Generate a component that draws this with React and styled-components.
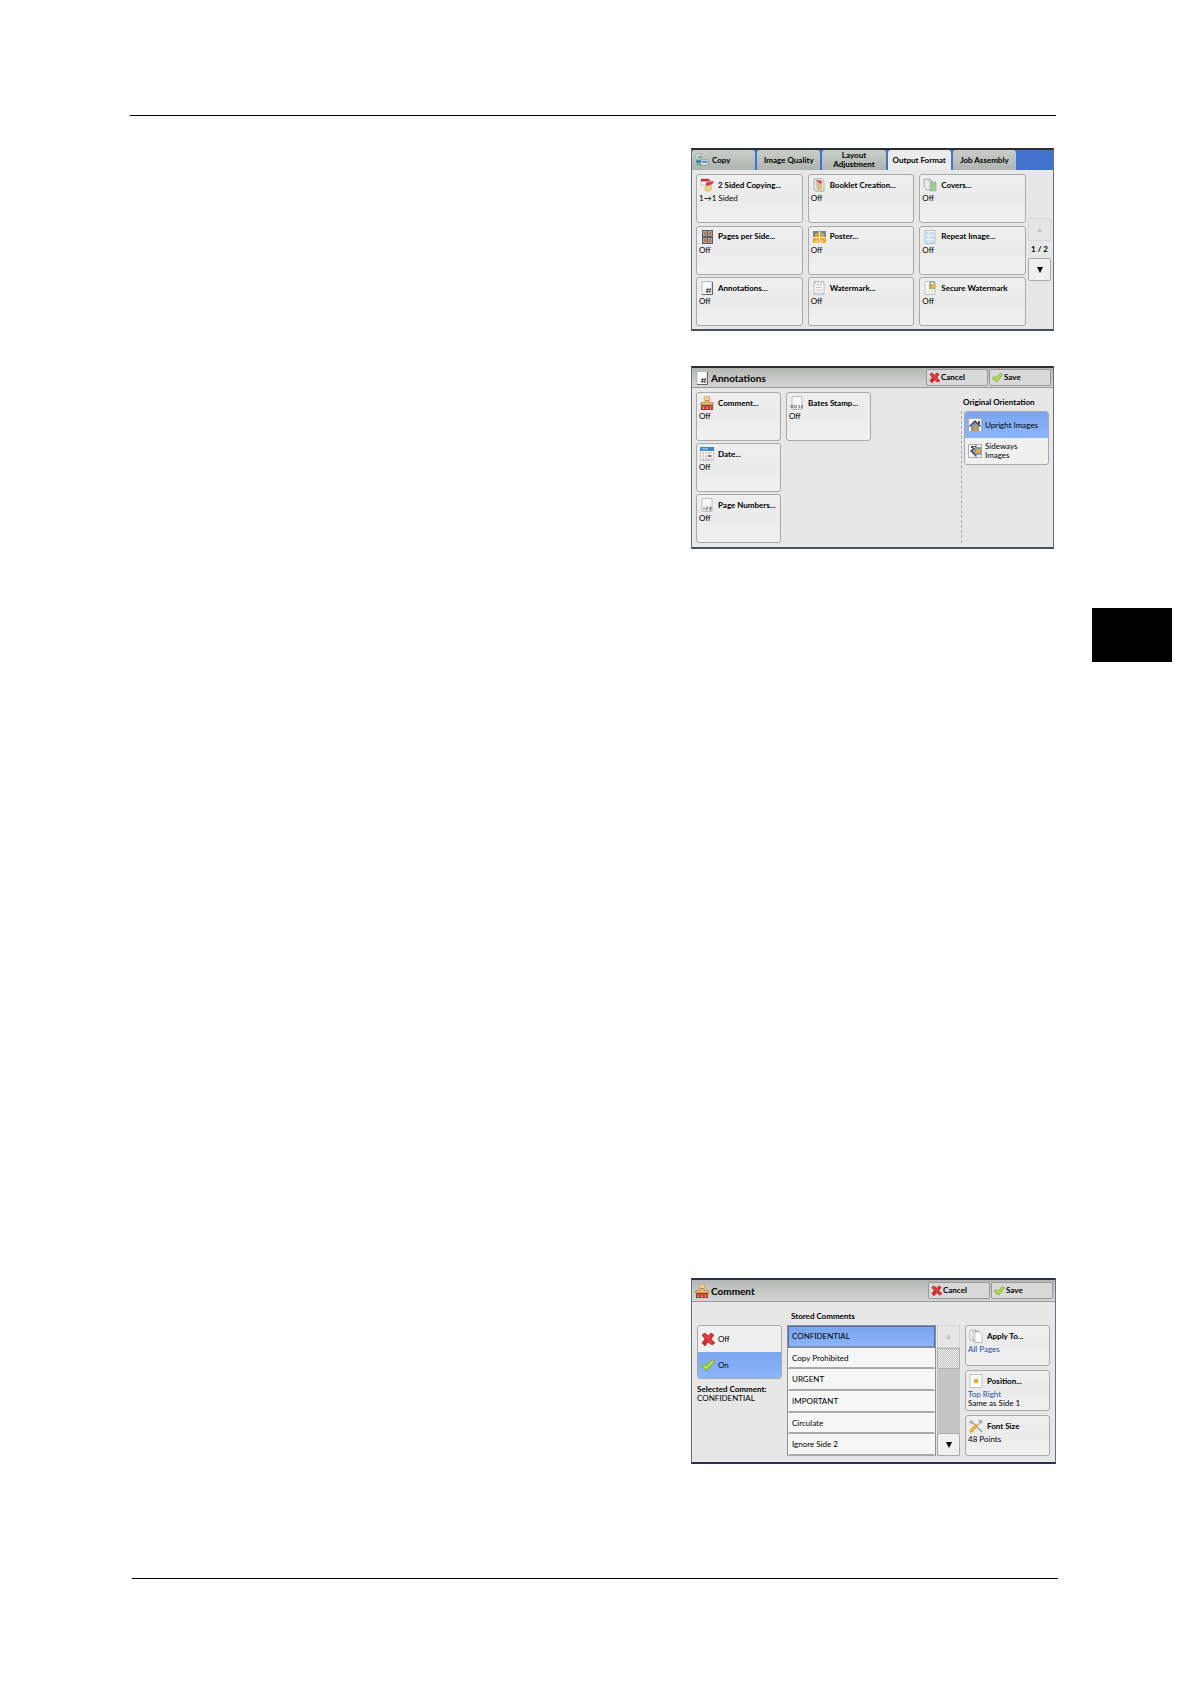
import React, { useState } from "react";
import styled, { createGlobalStyle } from "styled-components";

const GlobalStyle = createGlobalStyle`
  * {
    box-sizing: border-box;
  }
  body {
    margin: 0;
    background: #fff;
    color: #000;
    font-family: Lato, "Open Sans", sans-serif;
    font-size: 8px;
    line-height: 9px;
  }
  button {
    font: inherit;
    color: inherit;
    padding: 0;
    margin: 0;
    cursor: pointer;
  }
  svg {
    display: block;
    flex: none;
  }
`;

const Page = styled.div`
  display: grid;
  grid-template-columns: minmax(0, 1fr) 80px;
  column-gap: 36px;
  padding: 115px 18px 105px 130px;
`;

const Content = styled.main`
  display: flex;
  flex-direction: column;
  align-items: flex-end;
`;

const Rule = styled.hr`
  width: 100%;
  height: 1px;
  margin: 0;
  border: 0;
  background: #000;
`;

const FooterSpace = styled.footer`
  width: 100%;
  padding-top: 114px;
`;

const FooterRule = styled(Rule)`
  margin: 0 -2px 0 2px;
`;

const ThumbTab = styled.aside`
  height: 54px;
  margin-top: 493px;
  background: #000;
`;

const Screen = styled.section`
  display: flex;
  flex-direction: column;
  width: 363px;
  height: 183px;
  margin-top: ${(p) => p.$top}px;
  margin-right: 2px;
  border: 1px solid #667080;
  border-top: 2px solid #2b2f33;
  border-bottom: 2px solid #4a4e55;
  background: #e7e7e7;
`;

const WideScreen = styled(Screen)`
  width: 365px;
  height: 186px;
  margin-right: 0;
  border-top-color: #26324d;
  border-bottom-color: #26324d;
`;

const Tabs = styled.div`
  display: flex;
  gap: 2px;
  height: 20px;
  padding-right: 37px;
  background: #4274cf;
`;

const Tab = styled.button`
  display: flex;
  flex: 1;
  align-items: center;
  justify-content: ${(p) => (p.$start ? "flex-start" : "center")};
  gap: 3px;
  padding: 0 3px;
  border: 0;
  border-radius: 3px 3px 0 0;
  line-height: 9px;
  font-weight: bold;
  text-align: center;
  background: ${(p) => (p.$active ? "#ececec" : "linear-gradient(#c9ceca, #aeb4af)")};
`;

const TabText = styled.span`
  margin: 0 -3px;
`;

const ScreenBody = styled.div`
  display: flex;
  flex: 1;
  gap: ${(p) => p.$gap || 0}px;
  padding: 4px;
`;

const TabBody = styled(ScreenBody)`
  padding: 4px 2px 3px 4px;
`;

const CommentBody = styled(ScreenBody)`
  padding: 3px 5px 4px;
`;

const CardGrid = styled.div`
  display: grid;
  flex: ${(p) => (p.$fill ? 1 : "none")};
  grid-template-columns: repeat(${(p) => p.$cols}, ${(p) => (p.$fill ? "1fr" : "85px")});
  grid-template-rows: repeat(3, 49px);
  align-content: space-between;
  grid-auto-flow: column;
  gap: 2px 5px;
`;

const CardBox = styled.button`
  display: flex;
  flex-direction: column;
  height: ${(p) => p.$height || 49}px;
  padding: 3px 2px 0;
  border: 1px solid #a9a9a9;
  border-radius: 3px;
  text-align: left;
  background: linear-gradient(#efefef, #ebebeb 50%, #f1f1f1);
`;

const CardTitle = styled.span`
  display: flex;
  align-items: center;
  gap: 4px;
  margin: 0 0 2px 1px;
  font-weight: bold;
  white-space: nowrap;
`;

const CardValue = styled.span`
  white-space: nowrap;
  color: ${(p) => (p.$blue ? "#1f4fa5" : "#000")};
`;

const Pager = styled.div`
  display: flex;
  flex-direction: column;
  align-items: center;
  gap: 4px;
  width: 23px;
  margin: 44px 0 0 2px;
  font-weight: bold;
`;

const ArrowButton = styled.button`
  display: flex;
  align-items: center;
  justify-content: center;
  width: 23px;
  height: 23px;
  flex: none;
  border: 1px solid ${(p) => (p.disabled ? "#d8d8d8" : "#a9a9a9")};
  border-radius: 2px;
  color: ${(p) => (p.disabled ? "#c6c6c6" : "#000")};
  background: ${(p) => (p.disabled ? "#e6e6e6" : "#f0f0f0")};
`;

const Header = styled.header`
  display: flex;
  align-items: center;
  gap: 1px;
  height: ${(p) => p.$height}px;
  padding: 0 2px 0 3px;
  border-bottom: 1px solid #9a9a9a;
  background: linear-gradient(#b4b7b4, #d5d5d5);
`;

const Title = styled.h2`
  flex: 1;
  margin: 0 0 0 1px;
  font-size: 10px;
  line-height: 12px;
`;

const HeaderButton = styled.button`
  display: flex;
  align-items: center;
  gap: 1px;
  width: 62px;
  height: 17px;
  padding-left: 2px;
  border: 1px solid #999;
  border-radius: 2px;
  font-weight: bold;
  background: #d9d9d9;
`;

const Orientation = styled.div`
  display: flex;
  flex-direction: column;
  width: 88px;
  margin-left: auto;
`;

const Label = styled.strong`
  line-height: 10px;
`;

const OrientationLabel = styled(Label)`
  margin: 5px 0 4px 2px;
`;

const Divided = styled.div`
  flex: 1;
  padding-left: 2px;
  border-left: 1px dashed #aaa;
`;

const Choices = styled.div`
  display: flex;
  flex-direction: column;
  border: 1px solid #a9a9a9;
  border-radius: 3px;
  overflow: hidden;
`;

const Choice = styled.button`
  display: flex;
  align-items: center;
  gap: 3px;
  height: 26px;
  padding-left: 3px;
  border: 0;
  text-align: left;
  background: ${(p) => (p.$active ? "linear-gradient(#7ba5f0, #8cb5fa)" : "#f0f0f0")};
`;

const Side = styled.div`
  display: flex;
  flex-direction: column;
  width: 85px;
  padding-top: 20px;
`;

const SelectedComment = styled.p`
  margin: 6px 0 0;
`;

const Stored = styled.div`
  display: flex;
  flex: 1;
  flex-direction: column;
  padding-top: 6px;
`;

const StoredLabel = styled(Label)`
  margin: 0 0 4px 4px;
`;

const ListRow = styled.div`
  display: flex;
  gap: 1px;
  height: 131px;
`;

const List = styled.ul`
  display: flex;
  flex: 1;
  flex-direction: column;
  margin: 0;
  padding: 0;
  list-style: none;
  border: 1px solid #909090;
  border-bottom: 0;
`;

const ListItem = styled.li`
  display: flex;
  flex: 1;
`;

const ListButton = styled.button`
  flex: 1;
  padding-left: 3px;
  border: 1px solid ${(p) => (p.$active ? "#4a6ea8" : "#fafafa")};
  border-bottom: 2px solid ${(p) => (p.$active ? "#7f8b9e" : "#aaa")};
  text-align: left;
  background: ${(p) => (p.$active ? "linear-gradient(#7aa4ef, #8cb4f8)" : "#f6f6f6")};
`;

const ScrollBar = styled.div`
  display: flex;
  flex-direction: column;
  width: 23px;
  background: #c5c5c5;
`;

const Thumb = styled.div`
  flex: none;
  height: 21px;
  border: 1px solid #b0b0b0;
  background: repeating-conic-gradient(#e9e9e9 0 25%, #c9c9c9 0 50%) 0 0 / 2px 2px;
`;

const Track = styled.div`
  flex: 1;
`;

const Options = styled.div`
  display: flex;
  flex-direction: column;
  gap: 4px;
  width: 85px;
  padding-top: 20px;
`;

const Icon = ({ children, size = 14 }) => (
  <svg width={size} height={size} viewBox="0 0 14 14" aria-hidden="true">
    {children}
  </svg>
);

const Sheet = ({ x = 2, fill = "#f8f8f8" }) => (
  <path d={`M${x} .5h10v13H${x}z`} fill={fill} stroke="#aaa" strokeWidth=".7" />
);

const icons = {
  copy: (
    <>
      <path d="M1 1h6v5H1z" fill="#dcebf2" stroke="#7296a4" strokeWidth=".6" />
      <path d="M2 5l3-3 2 3z" fill="#67a957" />
      <path d="M1 7h5v3H1z" fill="#4387b2" />
      <path d="M6 7h7v5H6z" fill="#e8f3f8" stroke="#547f9b" strokeWidth=".6" />
      <path d="M7 8h5v2H7z" fill="#5596c2" />
      <path d="M3 10v2h3" fill="none" stroke="#4c9d47" />
    </>
  ),
  sided: (
    <>
      <path d="M1 1h8v6H1z" fill="#fff" stroke="#c98c90" strokeWidth=".6" />
      <path d="M1 1h8v2.500H1z" fill="#c92f3d" />
      <path d="M6 4.500l8-1.500-3 4-5 1z" fill="#d33b45" />
      <path d="M9 2l2 1M12 6l1-2" stroke="#8a2a33" strokeWidth=".7" />
      <path d="M5 8.500l6-1.500 1 4-3 2.500-4-1z" fill="#efd083" stroke="#cfad69" strokeWidth=".5" />
    </>
  ),
  booklet: (
    <>
      <path d="M2 1l7-1 3 3v10l-7 1-3-2z" fill="#e3e3df" stroke="#a29d98" strokeWidth=".7" />
      <path d="M4 2l6 1v9l-5 1z" fill="#cfb8ae" />
      <path d="M4 2l5 4 1-3z" fill="#cb3e4b" />
      <path d="M6 8l3-2 1 5-3 1z" fill="#dfc75f" />
    </>
  ),
  covers: (
    <>
      <path d="M1 1h6l2 2v9H4L1 9z" fill="#e8ede8" stroke="#8f9790" strokeWidth=".7" />
      <path d="M4 1l3 3v9M6 1l3 3v9" fill="none" stroke="#8f9790" strokeWidth=".6" />
      <path d="M8 4h5v9H8z" fill="#9bd09d" stroke="#7da57f" strokeWidth=".6" />
    </>
  ),
  pages: (
    <>
      <path d="M2 0h11v14H2z" fill="#5e5c5e" />
      <path d="M3 1h4v5H3zM8 1h4v5H8zM3 8h4v5H3zM8 8h4v5H8z" fill="#a7a4a5" />
      <path d="M4 2h2v3H4zM9 2h2v3H9zM4 9h2v3H4zM9 9h2v3H9z" fill="#bd7042" />
    </>
  ),
  poster: (
    <>
      <path d="M1 1h6v6H1zM8 1h6v6H8z" fill="#6f8c99" />
      <path d="M1 8h6v5H1zM8 8h6v5H8z" fill="#e6a72a" />
      <path d="M3 4l4-2v5H3zM8 2l4 2v3H8z" fill="#dfa33a" />
      <path d="M2 12l3-3 2 4zM9 9l3 3-4 1z" fill="#f8d268" />
    </>
  ),
  repeat: (
    <>
      <Sheet fill="#edf4fb" />
      <path d="M3 2h3v3H3zM7 2h4v3H7zM3 6h3v3H3zM7 6h4v3H7zM3 10h3v3H3zM7 10h4v3H7z" fill="#c7dff4" />
    </>
  ),
  hash: (
    <>
      <Sheet />
      <path d="M12.500 1v12.500H2" fill="none" stroke="#666" />
      <path d="M8 7l-1 5M10.500 7l-1 5M6 8.500h5M5.500 10.500h5" fill="none" stroke="#333" strokeWidth=".8" />
    </>
  ),
  watermark: (
    <>
      <Sheet />
      <path d="M4 4h6M4 6.500h6M4 9h6" stroke="#c9c9c9" />
      <path d="M2 2h10M3 12h8" stroke="#888" strokeWidth=".6" strokeDasharray="2 1" />
    </>
  ),
  secure: (
    <>
      <Sheet />
      <path d="M7 3V1h4v3" fill="none" stroke="#888" />
      <path d="M6 3h6v5H6z" fill="#a9b35f" />
      <path d="M9 3h4v4H9z" fill="#e5bc43" />
      <path d="M4 9h6M4 11h6" stroke="#ddd" />
    </>
  ),
  stamp: (
    <>
      <ellipse cx="7" cy="2.500" rx="3" ry="2.500" fill="#f1cf91" stroke="#b77a32" strokeWidth=".5" />
      <path d="M5.500 4.500h3l.5 1.500 4 .5 1 2.500H0l1-2.500 4-.5z" fill="#e8b465" stroke="#a66827" strokeWidth=".5" />
      <path d="M1 9h12v1.500H1z" fill="#754827" />
      <path d="M1 10.500h12V14H1z" fill="#df2626" />
      <path d="M3.500 11.500v1.500M7 11.500v1.500M10.500 11.500v1.500" stroke="#fff" />
    </>
  ),
  numbers: (
    <>
      <Sheet />
      <path d="M4 9v3M6 9h1.500v1.500H6V12h1.500M9 9h2v3H9M9 10.500h2" fill="none" stroke="#555" strokeWidth=".7" />
    </>
  ),
  bates: (
    <>
      <Sheet />
      <path d="M1 12V9.500h2V12M1 11h2M4.500 9.500h2V12h-2zM8 9.500h1.500V12H8M11 9.500h1.500V11H11v1h1.500" fill="none" stroke="#555" strokeWidth=".6" />
    </>
  ),
  date: (
    <>
      <path d="M.5.5h13v13H.5z" fill="#fafafa" stroke="#aaa" strokeWidth=".6" />
      <path d="M0 0h14v4H0z" fill="#3d87c9" />
      <path d="M2 2h6" stroke="#b6daf4" />
      <path d="M2 6h10M2 9h10M2 12h10" stroke="#b9b9b9" strokeWidth="1.500" strokeDasharray="2 1" />
      <path d="M8 8h3v2H8z" fill="#c45353" />
    </>
  ),
  cross: (
    <>
      <path d="M1 3l3-2 3 3 3-3 3 2-3 4 4 4-3 2-4-3-3 4-3-3 3-4z" fill="#d82a2e" stroke="#a82226" strokeWidth=".6" />
      <path d="M3 3l8 8M10 3L7 6" stroke="#ee7773" strokeWidth=".8" />
    </>
  ),
  check: (
    <>
      <path d="M0 8l3-2.500 2 2L10.500 2 14 3 6 13z" fill="#9bcf35" stroke="#719f45" strokeWidth=".6" />
      <path d="M3 8l2 2 7-7" fill="none" stroke="#d4ee79" />
    </>
  ),
  upright: (
    <>
      <path d="M.5.5h13v13H.5z" fill="#fafafa" stroke="#aaa" />
      <path d="M1 8l6-6 6 6-1 1-5-4-5 4zM10 3h2v4h-2z" fill="#45505c" />
      <path d="M3 8l4-3 4 3v5H3z" fill="#8798a6" />
      <path d="M6 8h3v5H6z" fill="#d99a43" />
    </>
  ),
  sideways: (
    <>
      <path d="M.5.5h13v13H.5z" fill="#fafafa" stroke="#aaa" />
      <path d="M8 1L2 7l6 6 1-1-4-5 4-5zM3 2h4v2H3z" fill="#45505c" />
      <path d="M8 3L5 7l3 4h5V3z" fill="#8798a6" />
      <path d="M8 5h4v4H8z" fill="#e5aa3f" />
    </>
  ),
  apply: (
    <>
      <path d="M1 1h6v10H1zM4 2h6v10H4z" fill="#f6f6f6" stroke="#999" strokeWidth=".6" />
      <path d="M6 3h5l2 2v8.500H6z" fill="#fff" stroke="#999" strokeWidth=".6" />
    </>
  ),
  position: (
    <>
      <path d="M1 .5h12v13H1z" fill="#fff" stroke="#aaa" strokeWidth=".7" />
      <path d="M5 5h4v4H5z" fill="#eca52b" />
    </>
  ),
  tools: (
    <>
      <path d="M3 3l9 9M2 1l1 3-3-1M13 11l-1 2" fill="none" stroke="#aaa" strokeWidth="1.500" />
      <path d="M13 1l-4 5M10 1l3 3" stroke="#999" strokeWidth="1.200" />
      <path d="M1 11l6-6 2 2-6 6-2 .5z" fill="#efb33b" stroke="#cf8b24" strokeWidth=".5" />
    </>
  ),
};

const Up = () => (
  <svg width="5" height="5" viewBox="0 0 5 5" aria-hidden="true">
    <path d="M2.500 0L5 5H0z" fill="currentColor" />
  </svg>
);

const Down = () => (
  <svg width="6" height="6" viewBox="0 0 6 6" aria-hidden="true">
    <path d="M0 0h6L3 6z" fill="currentColor" />
  </svg>
);

const Card = ({ icon, title, value = "Off", extra, blue, height }) => (
  <CardBox $height={height}>
    <CardTitle>
      <Icon>{icons[icon]}</Icon>
      {title}
    </CardTitle>
    <CardValue $blue={blue}>{value}</CardValue>
    {extra && <CardValue>{extra}</CardValue>}
  </CardBox>
);

const ScreenHeader = ({ icon, title, height = 20 }) => (
  <Header $height={height}>
    <Icon>{icons[icon]}</Icon>
    <Title>{title}</Title>
    <HeaderButton>
      <Icon size={11}>{icons.cross}</Icon>
      Cancel
    </HeaderButton>
    <HeaderButton>
      <Icon size={11}>{icons.check}</Icon>
      Save
    </HeaderButton>
  </Header>
);

const tabs = ["Copy", "Image Quality", "Layout Adjustment", "Output Format", "Job Assembly"];

const features = [
  ["sided", "2 Sided Copying...", "1→1 Sided"],
  ["pages", "Pages per Side..."],
  ["hash", "Annotations..."],
  ["booklet", "Booklet Creation..."],
  ["poster", "Poster..."],
  ["watermark", "Watermark..."],
  ["covers", "Covers..."],
  ["repeat", "Repeat Image..."],
  ["secure", "Secure Watermark"],
];

const comments = ["CONFIDENTIAL", "Copy Prohibited", "URGENT", "IMPORTANT", "Circulate", "Ignore Side 2"];

const OutputFormat = () => {
  const [tab, setTab] = useState("Output Format");

  return (
    <Screen $top={32}>
      <Tabs role="tablist">
        {tabs.map((name) => (
          <Tab
            key={name}
            role="tab"
            aria-selected={tab === name}
            $active={tab === name}
            $start={name === "Copy"}
            onClick={() => setTab(name)}
          >
            {name === "Copy" ? (
              <>
                <Icon>{icons.copy}</Icon>
                {name}
              </>
            ) : (
              <TabText>{name}</TabText>
            )}
          </Tab>
        ))}
      </Tabs>
      <TabBody>
        <CardGrid $cols={3} $fill>
          {features.map(([icon, title, value]) => (
            <Card key={title} icon={icon} title={title} value={value} />
          ))}
        </CardGrid>
        <Pager>
          <ArrowButton disabled aria-label="Previous page">
            <Up />
          </ArrowButton>
          1 / 2
          <ArrowButton aria-label="Next page">
            <Down />
          </ArrowButton>
        </Pager>
      </TabBody>
    </Screen>
  );
};

const Annotations = () => {
  const [upright, setUpright] = useState(true);

  return (
    <Screen $top={35}>
      <ScreenHeader icon="hash" title="Annotations" />
      <ScreenBody>
        <CardGrid $cols={2}>
          <Card icon="stamp" title="Comment..." />
          <Card icon="date" title="Date..." />
          <Card icon="numbers" title="Page Numbers..." />
          <Card icon="bates" title="Bates Stamp..." />
        </CardGrid>
        <Orientation>
          <OrientationLabel>Original Orientation</OrientationLabel>
          <Divided>
            <Choices>
              <Choice $active={upright} aria-pressed={upright} onClick={() => setUpright(true)}>
                <Icon>{icons.upright}</Icon>
                Upright Images
              </Choice>
              <Choice $active={!upright} aria-pressed={!upright} onClick={() => setUpright(false)}>
                <Icon>{icons.sideways}</Icon>
                <span>
                  Sideways
                  <br />
                  Images
                </span>
              </Choice>
            </Choices>
          </Divided>
        </Orientation>
      </ScreenBody>
    </Screen>
  );
};

const Comment = () => {
  const [on, setOn] = useState(true);
  const [selected, setSelected] = useState("CONFIDENTIAL");

  return (
    <WideScreen $top={729}>
      <ScreenHeader icon="stamp" title="Comment" height={22} />
      <CommentBody $gap={5}>
        <Side>
          <Choices>
            <Choice $active={!on} aria-pressed={!on} onClick={() => setOn(false)}>
              <Icon>{icons.cross}</Icon>
              Off
            </Choice>
            <Choice $active={on} aria-pressed={on} onClick={() => setOn(true)}>
              <Icon>{icons.check}</Icon>
              On
            </Choice>
          </Choices>
          <SelectedComment>
            <strong>Selected Comment:</strong>
            <br />
            {selected}
          </SelectedComment>
        </Side>
        <Stored>
          <StoredLabel>Stored Comments</StoredLabel>
          <ListRow>
            <List>
              {comments.map((text) => (
                <ListItem key={text}>
                  <ListButton
                    $active={selected === text}
                    aria-pressed={selected === text}
                    onClick={() => setSelected(text)}
                  >
                    {text}
                  </ListButton>
                </ListItem>
              ))}
            </List>
            <ScrollBar>
              <ArrowButton disabled aria-label="Scroll up">
                <Up />
              </ArrowButton>
              <Thumb />
              <Track />
              <ArrowButton aria-label="Scroll down">
                <Down />
              </ArrowButton>
            </ScrollBar>
          </ListRow>
        </Stored>
        <Options>
          <Card height={41} icon="apply" title="Apply To..." value="All Pages" blue />
          <Card height={41} icon="position" title="Position..." value="Top Right" extra="Same as Side 1" blue />
          <Card height={41} icon="tools" title="Font Size" value="48 Points" />
        </Options>
      </CommentBody>
    </WideScreen>
  );
};

const App = () => (
  <>
    <GlobalStyle />
    <Page>
      <Content>
        <Rule />
        <OutputFormat />
        <Annotations />
        <Comment />
        <FooterSpace>
          <FooterRule />
        </FooterSpace>
      </Content>
      <ThumbTab />
    </Page>
  </>
);

export default App;
